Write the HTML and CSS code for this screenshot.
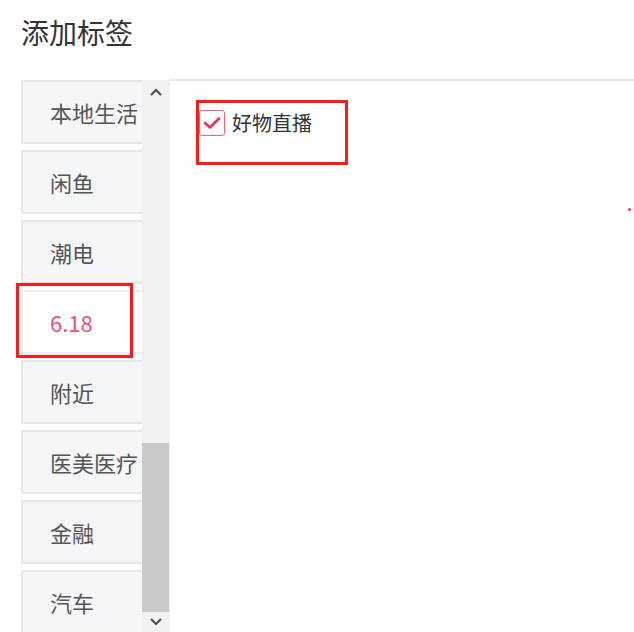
FILE: index.html
```html
<!DOCTYPE html>
<html lang="zh-CN">
<head>
    <meta charset="UTF-8">
    <title>添加标签</title>
    <link rel="stylesheet" href="styles.css">
</head>
<body>
    <h1 class="title">添加标签</h1>
    <div class="tag-panel">
        <div class="side">
            <div class="cat-list">
                <div class="cat-item">本地生活</div>
                <div class="cat-item">闲鱼</div>
                <div class="cat-item">潮电</div>
                <div class="cat-item active">6.18</div>
                <div class="cat-item">附近</div>
                <div class="cat-item">医美医疗</div>
                <div class="cat-item">金融</div>
                <div class="cat-item">汽车</div>
            </div>
            <div class="scrollbar">
                <div class="sb-btn">
                    <svg width="12" height="8" viewBox="0 0 12 8"><path d="M1 7 L6 2 L11 7" fill="none" stroke="#505050" stroke-width="2.2"/></svg>
                </div>
                <div class="sb-track"><div class="sb-thumb"></div></div>
                <div class="sb-btn">
                    <svg width="12" height="8" viewBox="0 0 12 8"><path d="M1 1 L6 6 L11 1" fill="none" stroke="#505050" stroke-width="2.2"/></svg>
                </div>
            </div>
        </div>
        <div class="content">
            <label class="check">
                <span class="check-box">
                    <svg width="18" height="14" viewBox="0 0 18 14"><path d="M2 7 L7 11.5 L16 2.5" fill="none" stroke="#ee2e55" stroke-width="2.6" stroke-linecap="round" stroke-linejoin="round"/></svg>
                </span>
                好物直播
            </label>
        </div>
    </div>

    <!-- red markup boxes drawn over the screenshot -->
    <div class="mark mark-check"></div>
    <div class="mark mark-cat"></div>
    <div class="dot"></div>
</body>
</html>
```

FILE: styles.css
```css
body {
    margin: 0;
    background: #fff;
    font-family: "Microsoft YaHei", "Noto Sans CJK SC", sans-serif;
    color: #333;
    height: 632px;
    overflow: hidden;
    position: relative;
}
.title {
    margin: 0;
    padding: 13px 0 0 21px;
    height: 79px;
    box-sizing: border-box;
    font-size: 28px;
    font-weight: normal;
    line-height: 38px;
    color: #333;
}
.tag-panel {
    display: flex;
    height: 553px;
}
.side {
    display: flex;
    margin-left: 21px;
    padding-top: 1px;
}
.cat-list {
    width: 121px;
    overflow: hidden;
}
.cat-item {
    width: 150px;
    height: 64px;
    box-sizing: border-box;
    margin-bottom: 6px;
    padding-left: 27px;
    border: 2px solid #e6e7eb;
    background: #f5f6f8;
    font-size: 22px;
    line-height: 60px;
    color: #555;
    white-space: nowrap;
}
.cat-item.active {
    background: #fff;
    color: #f0506e;
    border-color: #eceef1;
}
.scrollbar {
    width: 28px;
    display: flex;
    flex-direction: column;
    background: #f1f1f1;
}
.sb-btn {
    height: 20px;
    display: flex;
    align-items: center;
    justify-content: center;
}
.sb-btn:first-child {
    padding-top: 2px;
}
.sb-track {
    flex: 1;
    display: flex;
    flex-direction: column;
    justify-content: flex-end;
}
.sb-thumb {
    height: 169px;
    margin-right: 1px;
    background: #c9c9c9;
}
.content {
    flex: 1;
    border-top: 2px solid #e8e8ed;
    padding: 27px 0 0 29px;
}
.check {
    display: flex;
    align-items: center;
    gap: 7px;
    font-size: 20px;
    color: #333;
}
.check-box {
    width: 26px;
    height: 26px;
    box-sizing: border-box;
    border: 1.5px solid #f3607c;
    border-radius: 3px;
    display: flex;
    align-items: center;
    justify-content: center;
}
.mark {
    position: absolute;
    border: 3px solid #ff1a1a;
    box-sizing: border-box;
}
.mark-check {
    left: 196px;
    top: 100px;
    width: 152px;
    height: 65px;
}
.mark-cat {
    left: 16px;
    top: 283px;
    width: 117px;
    height: 75px;
}
.dot {
    position: absolute;
    left: 628px;
    top: 208px;
    width: 3px;
    height: 3px;
    border-radius: 50%;
    background: #f33;
}
```
